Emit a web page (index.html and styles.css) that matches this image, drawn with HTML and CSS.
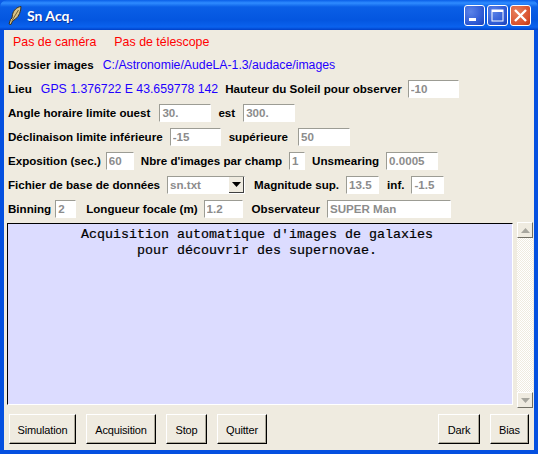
FILE: index.html
```html
<!DOCTYPE html>
<html lang="fr">
<head>
<meta charset="utf-8">
<title>Sn Acq.</title>
<link rel="stylesheet" href="styles.css">
</head>
<body>
<div class="window">
  <header class="titlebar">
    <svg class="feather" width="16" height="20" viewBox="0 0 16 20"><path d="M15 1.500C11 2 7.500 5 6.500 9.500L6 13L4.500 14.500L3 19L5 19.500L6.500 16L9.500 14C13 11.500 15 6 15 1.500Z" fill="#d6c288" stroke="#3a3320" stroke-width="1"/><path d="M12.500 5L6 15.500" stroke="#6d5f38" stroke-width="1"/></svg>
    <span class="title">Sn Acq.</span>
    <div class="controls">
      <div class="ctl ctl-blue"><svg width="21" height="21" viewBox="0 0 21 21"><rect x="5" y="13" width="7" height="3" fill="#fff"/></svg></div>
      <div class="ctl ctl-blue"><svg width="21" height="21" viewBox="0 0 21 21"><rect x="5" y="5" width="11" height="11" fill="none" stroke="#fff"/><rect x="5" y="5" width="11" height="2" fill="#fff"/></svg></div>
      <div class="ctl ctl-red"><svg width="21" height="21" viewBox="0 0 21 21"><path d="M5 5L16 16M16 5L5 16" stroke="#fff" stroke-width="2.4"/></svg></div>
    </div>
  </header>
  <main class="client">
    <div class="row row-status"><span class="red">Pas de caméra</span><span class="red red2">Pas de télescope</span></div>
    <div class="row"><label class="lbl">Dossier images</label><span class="blue nudge2">C:/Astronomie/AudeLA-1.3/audace/images</span></div>
    <div class="row"><label class="lbl">Lieu</label><span class="blue nudge2">GPS 1.376722 E 43.659778 142</span><label class="lbl">Hauteur du Soleil pour observer</label><input class="f w51 back1" value="-10" readonly></div>
    <div class="row"><label class="lbl">Angle horaire limite ouest</label><input class="f w52 nudge2" value="30." readonly><label class="lbl">est</label><input class="f w52 nudge1" value="300." readonly></div>
    <div class="row"><label class="lbl">Déclinaison limite inférieure</label><input class="f w51" value="-15" readonly><label class="lbl nudge1">supérieure</label><input class="f w52 nudge3" value="50" readonly></div>
    <div class="row"><label class="lbl">Exposition (sec.)</label><input class="f w28 back2" value="60" readonly><label class="lbl">Nbre d'images par champ</label><input class="f w16" value="1" readonly><label class="lbl">Unsmearing</label><input class="f w52" value="0.0005" readonly></div>
    <div class="row"><label class="lbl">Fichier de base de données</label>
      <div class="combo"><span class="combo-val">sn.txt</span><span class="combo-btn"><svg width="9" height="5" viewBox="0 0 9 5"><path d="M0 0H9L4.500 5Z" fill="#000"/></svg></span></div>
      <label class="lbl nudge2">Magnitude sup.</label><input class="f w33" value="13.5" readonly><label class="lbl nudge1">inf.</label><input class="f w33" value="-1.5" readonly></div>
    <div class="row"><label class="lbl">Binning</label><input class="f w21 back3" value="2" readonly><label class="lbl nudge3">Longueur focale (m)</label><input class="f w39 back1" value="1.2" readonly><label class="lbl nudge2">Observateur</label><input class="f w124" value="SUPER Man" readonly></div>
    <div class="log-row">
      <pre class="log">         Acquisition automatique d'images de galaxies
                pour découvrir des supernovae.</pre>
      <div class="scrollbar">
        <div class="sb-btn"><svg width="9" height="5" viewBox="0 0 9 5"><path d="M4.500 0L9 5H0Z" fill="#a7a69e"/></svg></div>
        <div class="sb-track"></div>
        <div class="sb-btn"><svg width="9" height="5" viewBox="0 0 9 5"><path d="M0 0H9L4.500 5Z" fill="#a7a69e"/></svg></div>
      </div>
    </div>
    <footer class="actions">
      <button class="btn w67">Simulation</button>
      <button class="btn w70">Acquisition</button>
      <button class="btn w41">Stop</button>
      <button class="btn w50">Quitter</button>
      <span class="spacer"></span>
      <button class="btn w42">Dark</button>
      <button class="btn w39b">Bias</button>
    </footer>
  </main>
</div>
</body>
</html>
```
FILE: styles.css
```css
* { box-sizing: border-box; }
html, body { margin: 0; padding: 0; }
body { width: 538px; height: 454px; overflow: hidden; background: #0a5ae6; font-family: "Liberation Sans", Arial, sans-serif; }
.window { width: 538px; height: 454px; display: flex; flex-direction: column; background: #0450e0; border-radius: 7px 7px 0 0; overflow: hidden; }
.titlebar { height: 30px; flex: none; display: flex; align-items: center; padding: 0 7px 0 6px; background: linear-gradient(#0a5fe8 0, #2f8cff 3px, #0a5fe6 7px, #0456e0 20px, #0a62ee 27px, #0040c8 30px); }
.feather { margin-right: 5px; }
.title { color: #fff; font: bold 14px Lato, "Liberation Sans", sans-serif; padding-top: 1px; text-shadow: 1px 1px 0 #0a2f9a; }
.controls { margin-left: auto; display: flex; gap: 2px; }
.ctl { width: 21px; height: 21px; border: 1px solid #fff; border-radius: 3px; overflow: hidden; position: relative; }
.ctl svg { position: absolute; left: -1px; top: -1px; }
.ctl-blue { background: radial-gradient(circle at 30% 30%, #5b83e8, #2a56d2 70%, #1c3fb4); }
.ctl-red { background: radial-gradient(circle at 30% 30%, #e8805c, #d8502c 70%, #b83410); }
.client { flex: 1; margin: 0 4px 4px; background: #efebe0; display: flex; flex-direction: column; }
.row { height: 24px; flex: none; display: flex; align-items: center; gap: 7px; padding-left: 4px; padding-top: 1px; white-space: nowrap; }
.row-status { height: 22px; padding-left: 9px; gap: 18px; }
.red { color: #ff0000; font-size: 12.4px; }
.blue { color: #1f00ff; font-size: 12.27px; }
.lbl { color: #000; font-size: 11.6px; font-weight: bold; }
.nudge1 { margin-left: 1px; }
.nudge2 { margin-left: 2px; }
.nudge3 { margin-left: 3px; }
.back1 { margin-left: -1px; }
.back2 { margin-left: -2px; }
.back3 { margin-left: -3px; }
.f { height: 18px; padding: 0 0 0 2px; font: bold 11.6px "Liberation Sans", Arial, sans-serif; color: #8c8c8c; background: #fff; border: 1px solid; border-color: #9c9c94 #fff #fff #9c9c94; outline: none; }
.w16 { width: 16px; }
.w21 { width: 21px; }
.w28 { width: 28px; }
.w33 { width: 33px; }
.w39 { width: 39px; }
.w51 { width: 51px; }
.w52 { width: 52px; }
.w124 { width: 124px; }
.combo { width: 78px; height: 18px; display: flex; align-items: stretch; background: #fff; border: 1px solid; border-color: #9c9c94 #fff #fff #9c9c94; }
.combo-val { flex: 1; padding-left: 2px; font-size: 11.6px; font-weight: bold; line-height: 16px; color: #8c8c8c; }
.combo-btn { width: 15px; display: flex; align-items: center; justify-content: center; background: #efebe0; border-right: 1px solid #404040; border-bottom: 1px solid #404040; }
.log-row { height: 186px; flex: none; margin-top: 2px; padding-left: 3px; display: flex; gap: 4px; }
.log { width: 506px; height: 182px; margin: 1px 0 0; padding: 3px 0 0 1px; background: #dcdcff; color: #000; font: 13.33px/16px "Liberation Mono", "Courier New", monospace; -webkit-text-stroke: 0.2px #000; border: 1px solid; border-color: #000 #fff #fff #000; }
.scrollbar { width: 16px; display: flex; flex-direction: column; }
.sb-btn { width: 16px; height: 16px; flex: none; display: flex; align-items: center; justify-content: center; background: #efebe0; border: 1px solid; border-color: #fff #716f64 #716f64 #fff; }
.sb-track { flex: 1; background: repeating-conic-gradient(#efebe0 0 25%, #fff 0 50%) 0 0 / 2px 2px; }
.actions { flex: 1; display: flex; gap: 10px; padding: 6px 5px 6px 5px; }
.spacer { flex: 1; }
.btn { height: 30px; padding: 2px 0 0; font: 11px "Liberation Sans", Arial, sans-serif; letter-spacing: -0.15px; color: #000; background: #efebe0; border: 1px solid; border-color: #fff #000 #000 #fff; box-shadow: inset -1px -1px 0 #aca899; }
.w67 { width: 67px; }
.w70 { width: 70px; }
.w41 { width: 41px; }
.w50 { width: 50px; }
.w42 { width: 42px; }
.w39b { width: 39px; }
```
